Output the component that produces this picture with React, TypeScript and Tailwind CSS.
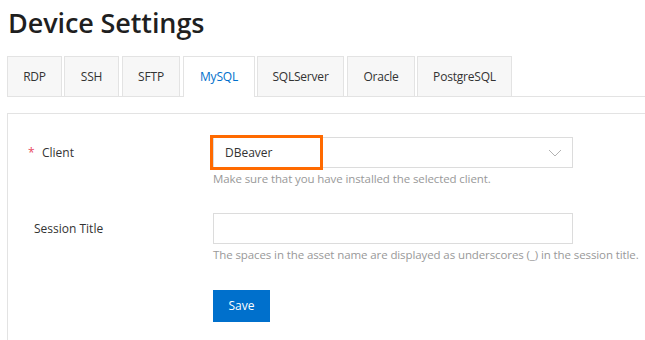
import React from "react";

const tabs = [
  { label: "RDP", w: 55, mr: 2 },
  { label: "SSH", w: 55, mr: 3 },
  { label: "SFTP", w: 58, mr: 3 },
  { label: "MySQL", w: 72, mr: 2, active: true },
  { label: "SQLServer", w: 87, mr: 3 },
  { label: "Oracle", w: 68, mr: 2 },
  { label: "PostgreSQL", w: 95, mr: 0 },
];

export default function App() {
  return (
    <div
      className="w-[645px] h-[340px] overflow-hidden bg-white text-[#333333]"
      style={{ fontFamily: '"Open Sans", "Noto Sans", sans-serif' }}
    >
      <div className="pl-[7px]">
        <h1 className="pt-[4px] pl-[1px] h-[56px] text-[27px] leading-[37px] font-semibold text-[#1f1f1f] tracking-[-0.1px]">
          Device Settings
        </h1>
        <div className="flex items-end h-[41px] border-b border-[#e3e3e3]">
          {tabs.map((t) => (
            <div
              key={t.label}
              style={{ width: t.w, marginRight: t.mr }}
              className={
                t.active
                  ? "h-[41px] -mb-px flex items-center justify-center border border-b-0 border-[#e3e3e3] bg-white text-[12px] tracking-[-0.2px] text-[#0070cc]"
                  : "h-[40px] flex items-center justify-center border border-b-0 border-[#e3e3e3] bg-[#f7f7f7] text-[12px] tracking-[-0.2px] text-[#333333]"
              }
            >
              {t.label}
            </div>
          ))}
        </div>
        <div className="mt-[16px] border-t border-l border-[#e3e3e3] h-[240px] pt-[23px]">
          {/* Client row */}
          <div className="flex">
            <div className="w-[205px] shrink-0 h-[31px] flex items-center pl-[20px] text-[12px]">
              <span className="text-[#e84a5f] w-[14px]">*</span>
              <span>Client</span>
            </div>
            <div className="flex flex-col">
              <div className="relative w-[360px] h-[31px] border border-[#dcdcdc] bg-white flex items-center justify-between pl-[11px] pr-[10px]">
                <span className="text-[12px] text-[#333333]">DBeaver</span>
                <svg width="14" height="8" viewBox="0 0 14 8" fill="none">
                  <path d="M1 1l6 6 6-6" stroke="#b3b3b3" strokeWidth="1" />
                </svg>
                <div className="absolute left-[-4px] top-[-3px] w-[113px] h-[35px] border-[3px] border-[#ff6a00]" />
              </div>
              <div className="mt-[3px] text-[11.5px] tracking-[-0.1px] leading-[16px] text-[#999999]">
                Make sure that you have installed the selected client.
              </div>
            </div>
          </div>
          {/* Session title row */}
          <div className="flex mt-[26px]">
            <div className="w-[205px] shrink-0 h-[31px] flex items-center pl-[26px] text-[12px]">
              Session Title
            </div>
            <div className="flex flex-col">
              <div className="w-[360px] h-[31px] border border-[#dcdcdc] bg-white" />
              <div className="mt-[3px] text-[11.5px] tracking-[-0.1px] leading-[16px] text-[#999999] whitespace-nowrap">
                The spaces in the asset name are displayed as underscores (_) in the session title.
              </div>
              <button className="mt-[27px] w-[57px] h-[32px] bg-[#0070cc] text-white text-[12px]">
                Save
              </button>
            </div>
          </div>
        </div>
      </div>
    </div>
  );
}
